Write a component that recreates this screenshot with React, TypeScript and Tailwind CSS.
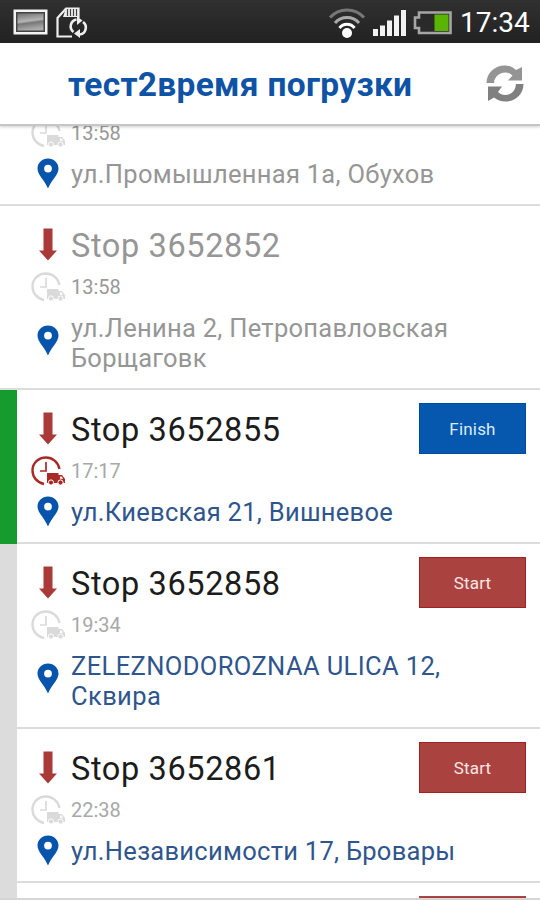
import clsx from "clsx";

type Stop = {
  title?: string;
  time: string;
  address: string[];
  state: "done" | "active" | "pending";
  height: string;
};

const STOPS: Stop[] = [
  { time: "13:58", address: ["ул.Промышленная 1а, Обухов"], state: "done", height: "h-[97px] -mt-[16px]" },
  { title: "Stop 3652852", time: "13:58", address: ["ул.Ленина 2, Петропавловская", "Борщаговк"], state: "done", height: "h-[184px]" },
  { title: "Stop 3652855", time: "17:17", address: ["ул.Киевская 21, Вишневое"], state: "active", height: "h-[154px]" },
  { title: "Stop 3652858", time: "19:34", address: ["ZELEZNODOROZNAA ULICA 12,", "Сквира"], state: "pending", height: "h-[185px]" },
  { title: "Stop 3652861", time: "22:38", address: ["ул.Независимости 17, Бровары"], state: "pending", height: "h-[154px]" },
];

function PictureIcon() {
  return (
    <svg width="36" height="28" viewBox="0 0 36 28">
      <defs>
        <linearGradient id="photo" x1="0" y1="0" x2="0.2" y2="1">
          <stop offset="0" stopColor="#707070" />
          <stop offset="0.5" stopColor="#b5b5b5" />
          <stop offset="0.62" stopColor="#777" />
          <stop offset="1" stopColor="#aaa" />
        </linearGradient>
      </defs>
      <rect x="1.5" y="1.500" width="34" height="25" fill="#f4f4f4" />
      <rect x="4" y="4" width="29" height="20" fill="#444" />
      <rect x="5.5" y="5.500" width="26" height="17" fill="url(#photo)" />
    </svg>
  );
}

function SdSyncIcon() {
  return (
    <svg width="34" height="34" viewBox="0 0 34 34" fill="none">
      <path d="M17 31.500H2.500V13L11 3.500H23.500V13" stroke="#eee" strokeWidth="2.200" />
      <path d="M11 3H24V12H8Z" fill="#eee" />
      <path d="M12.500 4v7M15.500 4v7M18.500 4v7M21.500 4v7" stroke="#444" strokeWidth="1.200" />
      <path d="M21.500 14.500a7 7 0 0 0-3 12.500M25 29.500a7 7 0 0 0 3-12.500" stroke="#eee" strokeWidth="2.600" />
      <path d="M22 11.500l5.500 4-5.500 4.500ZM25 24v9l-6-4.500Z" fill="#eee" />
    </svg>
  );
}

function WifiIcon() {
  return (
    <svg width="38" height="32" viewBox="0 0 38 32" fill="none" strokeWidth="3">
      <path d="M2 11.500A23 23 0 0 1 36 11.500" stroke="#777" />
      <path d="M7 17A16 16 0 0 1 31 17" stroke="#aaa" />
      <path d="M11.500 22A9.500 9.500 0 0 1 26.500 22" stroke="#fff" />
      <circle cx="19" cy="27" r="5" fill="#fff" />
    </svg>
  );
}

function SignalIcon() {
  return (
    <svg width="34" height="27" viewBox="0 0 34 27" fill="#f2f2f2">
      <rect x="0" y="19" width="5" height="7" />
      <rect x="7" y="15.500" width="5" height="10.500" />
      <rect x="14" y="10.500" width="5" height="15.500" />
      <rect x="21" y="5.500" width="5" height="20.500" />
      <rect x="28" y="0" width="5" height="26" />
    </svg>
  );
}

function BatteryIcon() {
  return (
    <svg width="40" height="24" viewBox="0 0 40 24">
      <path d="M6 1.500H37.500V22H6V17H2V6.500H6Z" fill="#2a2a2a" stroke="#a6a6a6" strokeWidth="2.600" />
      <rect x="21.500" y="3.500" width="14" height="16.500" fill="#59b500" />
    </svg>
  );
}

function RefreshIcon() {
  return (
    <svg width="38" height="38" viewBox="0 0 38 38">
      <path d="M0.500 18C0.500 8 9 0.500 18.500 0.500c5 0 8 1.500 11.500 4.500L36 2V15.500H22L26.500 10.500C24 8.500 22 7.500 19.500 7.500 13 7.500 8.500 12 8 18Z" fill="#949494" />
      <path d="M37.500 19C37.500 29 29.500 36.500 19.500 36.500c-5 0-8-1.500-11.500-4L2 36V21.500H16L12 27c2 2 4.500 3 7 3 6.500 0 10.500-4.500 11-11Z" fill="#808080" />
    </svg>
  );
}

function ArrowIcon() {
  return (
    <svg width="18" height="33" viewBox="0 0 18 33">
      <path d="M4.500 0.500H13.500V22.500H18L9 32.500 0 22.500H4.500Z" fill="#a93a38" />
    </svg>
  );
}

function ClockTruckIcon({ color }: { color: string }) {
  return (
    <svg width="35" height="30" viewBox="0 0 35 30" fill="none">
      <path d="M13 28C6 26.500 1.500 21 1.500 14.500 1.500 7 7.500 1.500 15 1.500c6.500 0 12 4.500 13.500 11.500" stroke={color} strokeWidth="2.400" />
      <path d="M15 6v9H9" stroke={color} strokeWidth="1.700" />
      <path d="M16 17H27.500V19H31l3 4V27H16Z" fill={color} />
      <path d="M29 20.500h1.500l1.700 2.300H29Z" fill="#fff" />
      <circle cx="20" cy="26.500" r="2.600" fill={color} stroke="#fff" />
      <circle cx="29.500" cy="26.500" r="2.600" fill={color} stroke="#fff" />
    </svg>
  );
}

function PinIcon() {
  return (
    <svg width="22" height="31" viewBox="0 0 22 31">
      <path fillRule="evenodd" d="M11 0.500C5 0.500 0.500 5 0.500 10.500 0.500 17 7 21 11 30.500 15 21 21.500 17 21.500 10.500 21.500 5 17 0.500 11 0.500ZM11 6.700a3.900 3.900 0 1 1 0 7.800 3.900 3.900 0 0 1 0-7.800Z" fill="#0754ad" />
    </svg>
  );
}

function StatusBar() {
  return (
    <div className="flex h-[43px] shrink-0 items-center bg-linear-to-b from-[#303030] to-[#222222] pr-[10px] pl-3 text-white">
      <PictureIcon />
      <div className="ml-[7px]">
        <SdSyncIcon />
      </div>
      <div className="ml-auto flex items-center">
        <WifiIcon />
        <div className="mt-[3px] ml-[7px]">
          <SignalIcon />
        </div>
        <div className="mt-[2px] ml-[6px]">
          <BatteryIcon />
        </div>
        <span className="mt-[3px] ml-[7px] w-[70px] text-[28px] leading-10 whitespace-nowrap">17:34</span>
      </div>
    </div>
  );
}

function StopRow({ stop }: { stop: Stop }) {
  const done = stop.state === "done";
  const active = stop.state === "active";
  const twoLines = stop.address.length > 1;

  return (
    <li className={clsx("flex shrink-0", stop.height, done && "border-b-2 border-[#dcdcdc]")}>
      <div
        className={clsx(
          "w-[17px] shrink-0",
          active && "bg-[#169b2f]",
          stop.state === "pending" && "bg-[#dcdcdc]",
        )}
      />
      <div className={clsx("flex flex-1 pl-[14px]", !done && "border-b-2 border-[#dcdcdc]")}>
        <div className={clsx("flex-1", stop.title && "pt-[22px]")}>
          {stop.title && (
            <div className="flex h-[35px] items-center">
              <div className="w-[40px] shrink-0 pb-[3px] pl-[8px]">
                <ArrowIcon />
              </div>
              <span
                className={clsx(
                  "text-[32.5px] leading-9 tracking-[0.62px] whitespace-nowrap",
                  done ? "text-[#969696]" : "text-[#1c1c1c]",
                )}
              >
                {stop.title}
              </span>
            </div>
          )}
          <div className="flex h-[47px] items-center">
            <div className="w-[40px] shrink-0">
              <ClockTruckIcon color={active ? "#a82a26" : "#dadada"} />
            </div>
            <span className={clsx("text-[20px] whitespace-nowrap", done ? "text-[#999999]" : "text-[#a8a8a8]")}>
              {stop.time}
            </span>
          </div>
          <div className={clsx("flex items-center", twoLines ? "pt-[3px]" : "pt-[2px]")}>
            <div className={clsx("w-[40px] shrink-0 pl-[6px]", twoLines ? "pb-[5px]" : "pb-[2px]")}>
              <PinIcon />
            </div>
            <div
              className={clsx(
                "text-[25.5px] whitespace-nowrap",
                twoLines ? "leading-[30px]" : "leading-[30.5px]",
                twoLines && !done ? "tracking-[0.38px]" : "tracking-[0.28px]",
                done ? "text-[#969696]" : "text-[#2f568c]",
              )}
            >
              {stop.address.map((line) => (
                <div key={line}>{line}</div>
              ))}
            </div>
          </div>
        </div>
        {!done && (
          <button
            className={clsx(
              "mt-[13px] mr-[14px] -ml-[107px] flex h-[51px] w-[107px] shrink-0 items-center justify-center border pt-[2px] text-[17px] tracking-[0.2px]",
              active
                ? "border-[#0049a5] bg-[#0558ae] text-[#dcebfa]"
                : "border-[#a22222] bg-[#aa4340] text-[#fbe6e4]",
            )}
          >
            {active ? "Finish" : "Start"}
          </button>
        )}
      </div>
    </li>
  );
}

export default function App() {
  return (
    <div className="flex h-[900px] w-[540px] flex-col overflow-hidden bg-white font-['Roboto',sans-serif]">
      <StatusBar />
      <header className="z-10 flex h-[83px] shrink-0 items-center border-b-2 border-[#c6c6c6] bg-white pr-[16px] pl-[68px] shadow-[0_1px_3px_rgba(0,0,0,0.2)]">
        <h1 className="flex-1 pt-[3px] text-[33.5px] leading-10 font-bold tracking-[0.3px] whitespace-nowrap text-[#0f53a6]">
          тест2время погрузки
        </h1>
        <RefreshIcon />
      </header>
      <main className="-mt-px flex-1 overflow-hidden border-b-2 border-[#d5d5d5]">
        <ul className="flex flex-col">
          {STOPS.map((stop) => (
            <StopRow key={stop.address[0]} stop={stop} />
          ))}
          {/* next row, only the top edge of its button is in view */}
          <li className="flex h-[154px]">
            <div className="w-[17px] bg-[#dcdcdc]" />
            <div className="mt-[13px] mr-[14px] ml-auto h-[51px] w-[107px] bg-[#aa4340]" />
          </li>
        </ul>
      </main>
    </div>
  );
}
